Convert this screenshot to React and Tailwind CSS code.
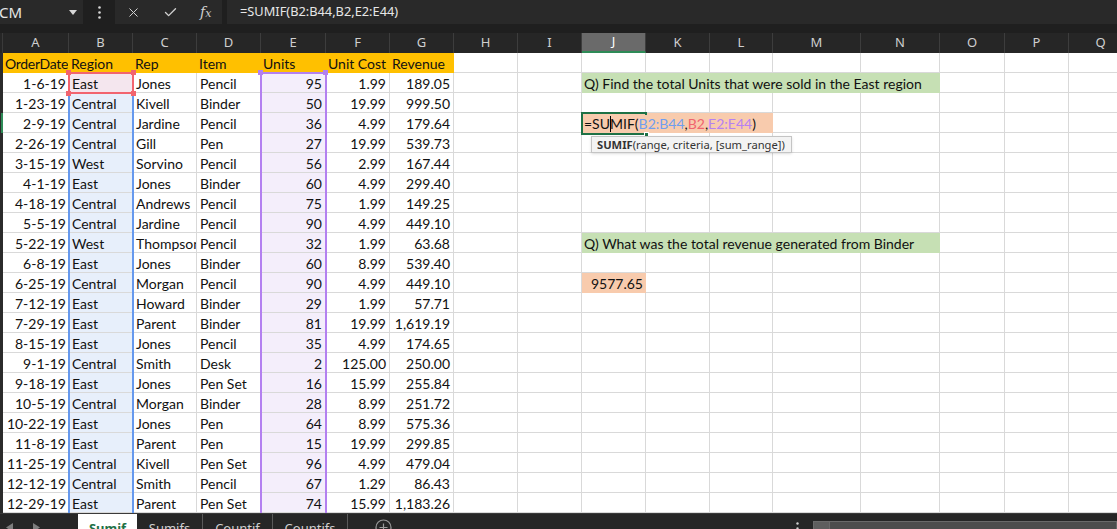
import { X, Check } from "lucide-react";

const COLS = [
  { l: "A", w: "w-[66px]" },
  { l: "B", w: "w-[64px]" },
  { l: "C", w: "w-[64px]" },
  { l: "D", w: "w-[64px]" },
  { l: "E", w: "w-[65px]" },
  { l: "F", w: "w-[64px]" },
  { l: "G", w: "w-[64px]" },
  { l: "H", w: "w-[64px]" },
  { l: "I", w: "w-[64px]" },
  { l: "J", w: "w-[64px]" },
  { l: "K", w: "w-[64px]" },
  { l: "L", w: "w-[63px]" },
  { l: "M", w: "w-[88px]" },
  { l: "N", w: "w-[79px]" },
  { l: "O", w: "w-[65px]" },
  { l: "P", w: "w-[64px]" },
  { l: "Q", w: "w-[64px]" },
];

const HEADERS = ["OrderDate", "Region", "Rep", "Item", "Units", "Unit Cost", "Revenue"];

const DATA = [
  ["1-6-19", "East", "Jones", "Pencil", "95", "1.99", "189.05"],
  ["1-23-19", "Central", "Kivell", "Binder", "50", "19.99", "999.50"],
  ["2-9-19", "Central", "Jardine", "Pencil", "36", "4.99", "179.64"],
  ["2-26-19", "Central", "Gill", "Pen", "27", "19.99", "539.73"],
  ["3-15-19", "West", "Sorvino", "Pencil", "56", "2.99", "167.44"],
  ["4-1-19", "East", "Jones", "Binder", "60", "4.99", "299.40"],
  ["4-18-19", "Central", "Andrews", "Pencil", "75", "1.99", "149.25"],
  ["5-5-19", "Central", "Jardine", "Pencil", "90", "4.99", "449.10"],
  ["5-22-19", "West", "Thompson", "Pencil", "32", "1.99", "63.68"],
  ["6-8-19", "East", "Jones", "Binder", "60", "8.99", "539.40"],
  ["6-25-19", "Central", "Morgan", "Pencil", "90", "4.99", "449.10"],
  ["7-12-19", "East", "Howard", "Binder", "29", "1.99", "57.71"],
  ["7-29-19", "East", "Parent", "Binder", "81", "19.99", "1,619.19"],
  ["8-15-19", "East", "Jones", "Pencil", "35", "4.99", "174.65"],
  ["9-1-19", "Central", "Smith", "Desk", "2", "125.00", "250.00"],
  ["9-18-19", "East", "Jones", "Pen Set", "16", "15.99", "255.84"],
  ["10-5-19", "Central", "Morgan", "Binder", "28", "8.99", "251.72"],
  ["10-22-19", "East", "Jones", "Pen", "64", "8.99", "575.36"],
  ["11-8-19", "East", "Parent", "Pen", "15", "19.99", "299.85"],
  ["11-25-19", "Central", "Kivell", "Pen Set", "96", "4.99", "479.04"],
  ["12-12-19", "Central", "Smith", "Pencil", "67", "1.29", "86.43"],
  ["12-29-19", "East", "Parent", "Pen Set", "74", "15.99", "1,183.26"],
];

const QUESTIONS = {
  2: "Q) Find the total Units that were sold in the East region",
  10: "Q) What was the total revenue generated from Binder",
};

function Cell({ w, line = "border-[#d9d9d9]", className = "", children }) {
  return (
    <div
      className={`${w} ${line} shrink-0 h-full border-r border-b px-[3px] pt-px leading-[19px] whitespace-nowrap overflow-hidden ${className}`}
    >
      {children}
    </div>
  );
}

function Empty({ from, to }) {
  return COLS.slice(from, to).map((c) => <Cell key={c.l} w={c.w} />);
}

function RightSide({ r }) {
  if (QUESTIONS[r]) {
    return (
      <>
        <Cell w="w-[358px]" line="border-[#c6e0b4]" className="bg-[#c6e0b4] pl-[2px]">
          {QUESTIONS[r]}
        </Cell>
        <Empty from={14} to={17} />
      </>
    );
  }
  if (r === 4) {
    return (
      <>
        <Cell w="w-[191px]" line="border-[#f8cbad]" className="bg-[#f8cbad] pl-[2px] overflow-visible">
          <span className="relative z-10 inline-block bg-[#f8cbad] leading-[17px]">
            <span>=SU</span>
            <span className="inline-block w-px h-[16px] -mr-px bg-black align-[-3px]" />
            <span>MIF(</span>
            <span className="text-[#6f9ef0]">B2:B44</span>
            <span>,</span>
            <span className="text-[#f0646e]">B2</span>
            <span>,</span>
            <span className="text-[#b681f2]">E2:E44</span>
            <span>)</span>
          </span>
        </Cell>
        <Empty from={12} to={17} />
      </>
    );
  }
  if (r === 12) {
    return (
      <>
        <Cell w="w-[64px]" line="border-[#f8cbad]" className="bg-[#f8cbad] text-right pr-[2px]">
          9577.65
        </Cell>
        <Empty from={10} to={17} />
      </>
    );
  }
  return <Empty from={9} to={17} />;
}

function DataRow({ r, row }) {
  return (
    <div className="flex h-5">
      <div
        className={`w-[3px] shrink-0 bg-[#2b2b2b] ${r === 4 ? "border-r-2 border-[#2e8b57]" : ""}`}
      />
      <Cell w="w-[66px]" className="text-right pr-[2px]">{row[0]}</Cell>
      <Cell w="w-[64px]" className={r === 2 ? "bg-[#f4e6ee]" : "bg-[#e7effb]"}>
        {row[1]}
      </Cell>
      <Cell w="w-[64px]">{row[2]}</Cell>
      <Cell w="w-[64px]">{row[3]}</Cell>
      <Cell w="w-[65px]" className="bg-[#f4eefb] text-right">{row[4]}</Cell>
      <Cell w="w-[64px]" className="text-right">{row[5]}</Cell>
      <Cell w="w-[64px]" className="text-right">{row[6]}</Cell>
      <Empty from={7} to={9} />
      <RightSide r={r} />
    </div>
  );
}

function Handle({ className }) {
  return <div className={`absolute w-[5px] h-[5px] ${className}`} />;
}

export default function App() {
  return (
    <div className="relative w-[1117px] h-[529px] overflow-hidden bg-[#1f1f1f] font-['Lato',sans-serif] text-[14px] text-[#111]">
      {/* formula bar */}
      <div className="flex h-[24px] font-['Noto_Sans',sans-serif] text-[#e6e6e6]">
        <div className="w-[83px] shrink-0 bg-[#292929] flex items-center justify-between pr-[6px]">
          <span className="-ml-px text-[15px]">CM</span>
          <svg width="8" height="5" viewBox="0 0 8 5">
            <path d="M0 0h8L4 5z" fill="#d8d8d8" />
          </svg>
        </div>
        <div className="w-[32px] shrink-0 flex items-center justify-center">
          <svg width="3" height="13" viewBox="0 0 3 13">
            <circle cx="1.5" cy="1.5" r="1.3" fill="#d8d8d8" />
            <circle cx="1.5" cy="6.5" r="1.3" fill="#d8d8d8" />
            <circle cx="1.5" cy="11.5" r="1.3" fill="#d8d8d8" />
          </svg>
        </div>
        <div className="w-[107px] shrink-0 bg-[#292929] flex items-center pl-[11px] gap-[22px] text-[#d0d0d0]">
          <X size={15} strokeWidth={1.6} />
          <Check size={15} strokeWidth={2.2} />
          <span className="font-['DejaVu_Serif',serif] italic text-[14px] leading-none">
            f<span className="text-[11px]">x</span>
          </span>
        </div>
        <div className="w-[5px] shrink-0" />
        <div className="flex-1 bg-[#292929] flex items-center pl-[13px] text-[12.8px]">
          =SUMIF(B2:B44,B2,E2:E44)
        </div>
      </div>
      <div className="h-[9px]" />

      {/* column headers */}
      <div className="flex h-5 bg-[#262626] font-['Noto_Sans',sans-serif] text-[13px] text-[#cfcfcf]">
        <div className="w-[3px] shrink-0 border-r border-[#3a3a3a]" />
        {COLS.map((c) => (
          <div
            key={c.l}
            className={`${c.w} shrink-0 border-r border-[#3d3d3d] flex items-center justify-center ${
              c.l === "J" ? "bg-[#6a6a6a] border-b-2 border-b-[#2e8b57] text-white" : ""
            }`}
          >
            {c.l}
          </div>
        ))}
      </div>

      {/* header row */}
      <div className="flex h-5 bg-white">
        <div className="w-[3px] shrink-0 bg-[#2b2b2b]" />
        {COLS.slice(0, 7).map((c, i) => (
          <Cell
            key={c.l}
            w={c.w}
            line="border-[#ffc000]"
            className={`bg-[#ffc000] pl-[2px] ${i === 0 ? "tracking-[-0.3px]" : ""}`}
          >
            {HEADERS[i]}
          </Cell>
        ))}
        <Empty from={7} to={17} />
      </div>

      <div className="bg-white">
        {DATA.map((row, i) => (
          <DataRow key={i} r={i + 2} row={row} />
        ))}
      </div>

      {/* sheet tabs */}
      <div className="flex h-[30px] bg-[#262626] border-t border-[#3a3a3a] font-['Noto_Sans',sans-serif] text-[13px]">
        <div className="w-[78px] shrink-0 flex pt-[9px] pl-[6px] gap-[20px]">
          <svg width="7" height="9" viewBox="0 0 7 9">
            <path d="M7 0v9L0 4.5z" fill="#7d7d7d" />
          </svg>
          <svg width="7" height="9" viewBox="0 0 7 9">
            <path d="M0 0v9l7-4.5z" fill="#7d7d7d" />
          </svg>
        </div>
        <div className="w-[59px] shrink-0 bg-white text-center pt-[5px] font-bold text-[#1e7145] underline">
          Sumif
        </div>
        <div className="w-[66px] shrink-0 border-r border-[#5a5a5a] text-center pt-[5px] text-[#d0d0d0]">
          Sumifs
        </div>
        <div className="w-[70px] shrink-0 border-r border-[#5a5a5a] text-center pt-[5px] text-[#d0d0d0]">
          Countif
        </div>
        <div className="w-[75px] shrink-0 border-r border-[#5a5a5a] text-center pt-[5px] text-[#d0d0d0]">
          Countifs
        </div>
        <div className="w-[70px] shrink-0 flex justify-center pt-[5px]">
          <svg width="17" height="17" viewBox="0 0 17 17">
            <circle cx="8.5" cy="8.5" r="7.5" fill="none" stroke="#9a9a9a" strokeWidth="1.2" />
            <path d="M8.5 4.5v8M4.5 8.5h8" stroke="#9a9a9a" strokeWidth="1.2" />
          </svg>
        </div>
        <div className="flex-1 flex justify-end pr-[14px] pt-[8px]">
          <svg width="3" height="13" viewBox="0 0 3 13">
            <circle cx="1.5" cy="1.5" r="1.2" fill="#cfcfcf" />
            <circle cx="1.5" cy="6.5" r="1.2" fill="#cfcfcf" />
            <circle cx="1.5" cy="11.5" r="1.2" fill="#cfcfcf" />
          </svg>
        </div>
        <div className="w-[304px] shrink-0 mt-[7px] bg-[#4d4d4d] border border-[#6a6a6a] flex">
          <div className="w-[16px] h-full bg-[#5e5e5e] border-r border-[#6a6a6a]" />
        </div>
      </div>

      {/* range highlights */}
      <div className="absolute left-[68px] top-[93px] w-[2px] h-[420px] bg-[#6699ee]" />
      <div className="absolute left-[132px] top-[93px] w-[2px] h-[420px] bg-[#6699ee]" />
      <div className="absolute left-[68px] top-[72px] w-[66px] h-[22px] border-2 border-[#f2646e]" />
      <Handle className="left-[66px] top-[70px] bg-[#f2646e]" />
      <Handle className="left-[131px] top-[70px] bg-[#f2646e]" />
      <Handle className="left-[66px] top-[91px] bg-[#f2646e]" />
      <Handle className="left-[131px] top-[91px] bg-[#f2646e]" />

      <div className="absolute left-[260px] top-[72px] w-[67px] h-[441px] border-2 border-b-0 border-[#b380f0]" />
      <Handle className="left-[258px] top-[70px] bg-[#b380f0]" />
      <Handle className="left-[323px] top-[70px] bg-[#b380f0]" />

      {/* active cell */}
      <div className="absolute left-[581px] top-[112px] w-[66px] h-[23px] border-2 border-[#1e7145]" />
      <div className="absolute left-[644px] top-[132px] w-[5px] h-[5px] bg-[#1e7145] border border-white" />

      {/* function tooltip */}
      <div className="absolute left-[591px] top-[136px] w-[201px] h-[17px] bg-[#f3f3f3] border border-[#c4c4c4] shadow-sm font-['Noto_Sans',sans-serif] text-[11.2px] leading-[15px] text-[#333] pl-[5px] whitespace-nowrap">
        <span className="font-bold">SUMIF</span>(range, criteria, [sum_range])
      </div>
    </div>
  );
}
